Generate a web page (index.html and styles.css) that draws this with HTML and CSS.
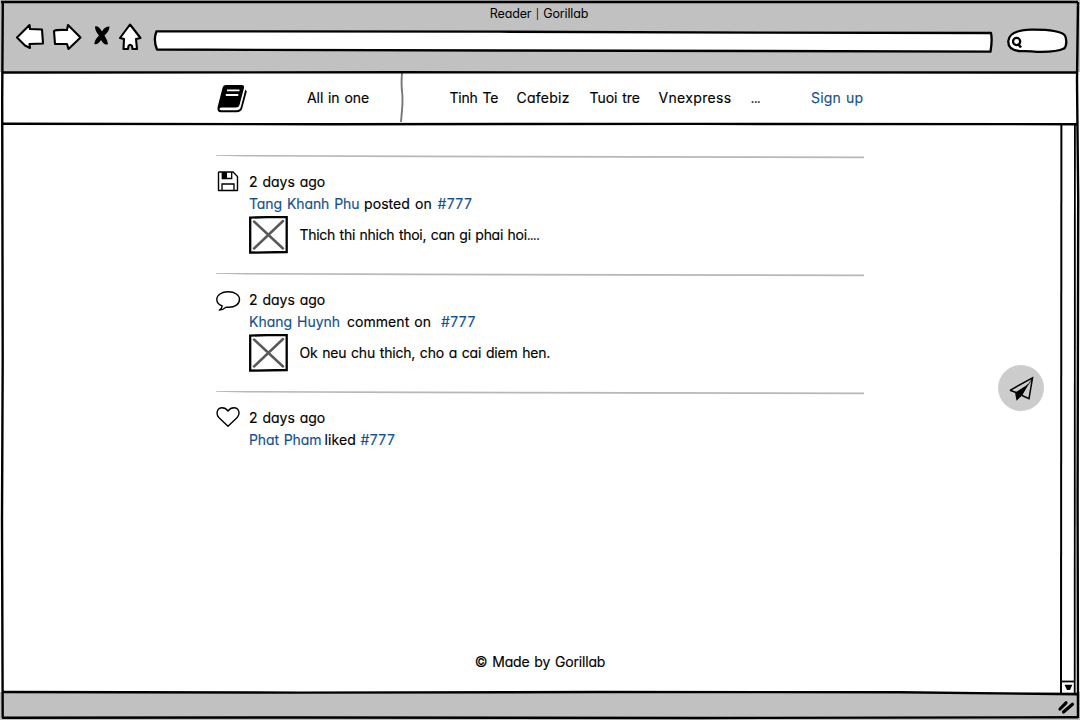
FILE: index.html
```
<!DOCTYPE html>
<html lang="vi">
<head>
<meta charset="utf-8">
<title>Reader | Gorillab</title>
<link rel="stylesheet" href="styles.css">
</head>
<body>
<div class="window">
  <div class="chrome">
    <div class="window-title">Reader <span class="pipe">|</span> Gorillab</div>
    <div class="toolbar">
      <svg class="nav-icons" width="140" height="44" viewBox="10 16 140 44">
        <g fill="#fff" stroke="#000" stroke-width="2.1" stroke-linejoin="round">
          <path d="M17 37.5 L29.500 25 L30 29 L42 29.500 L43 43.500 L29.500 44 L30 48 L25 45.500 Z"/>
          <path d="M54 31 Q56 29.500 67 30 L68 25 L80.500 37.500 L68.500 49 L67 44 L55 44 Z"/>
          <path d="M120 38 L130 24.500 L140.500 38 L136 39 L137 49 L132.500 49 L132 46 Q130 43.500 128.500 46 L128 49 L123.500 49 L124 39 Z"/>
        </g>
        <path d="M95 26.500 Q98.500 25.500 102 31.500 Q104.500 26.500 109.500 26.500 Q109.500 31 104.500 35.500 Q107.500 40 108 44 Q104.500 46 101 40 Q98 45 94.300 44 Q94.500 40 99 35.500 Q95 31 95 26.500Z" fill="#000"/>
      </svg>
      <svg class="address" width="842" height="26" viewBox="152 28 842 26">
        <path d="M156.500 31.300 L500 31.700 L760 32.700 L991 33 Q992.500 40 990.500 51.700 L760 51 L500 50.500 L157 49.500 Q153 40 156.500 31.300Z" fill="#fff" stroke="#000" stroke-width="2.300" stroke-linejoin="round"/>
      </svg>
      <svg class="search" width="64" height="30" viewBox="1005 26 64 30">
        <path d="M1008.300 41 C1009 33 1019 30 1031 29.700 C1045 29.500 1060 31 1064.500 35 C1067 38 1067 46 1064 48.500 C1058 51.500 1046 52 1037 51.800 C1029 51 1024 51.300 1019 51 C1011 50 1008 46 1008.300 41Z" fill="#fff" stroke="#000" stroke-width="2.300"/>
        <circle cx="1016.600" cy="41.500" r="3.600" fill="none" stroke="#000" stroke-width="2.300"/>
        <path d="M1018.500 44.500 L1021 47.500" stroke="#000" stroke-width="2.600"/>
      </svg>
    </div>
  </div>

  <header class="site-header">
    <svg class="logo" width="32" height="30" viewBox="216 83 32 30">
      <path d="M226 85 H241.500 Q244.800 85 244 88 L239.500 105 Q238.800 107.500 236 107.500 H222.500 Q219.500 107.500 219.500 108.800 Q219.500 110.300 222.500 110.300 H236.500 Q239.800 110.300 240.800 107 L245.300 89.500 L246.800 91.500 L242.200 108.500 Q240.800 112.300 236.800 112.300 H221 Q216.700 112.300 217.600 107 L222.500 88 Q223.200 85 226 85Z" fill="#000"/>
      <path d="M227 90.400 H239.500 M225.800 95 H238.300" stroke="#fff" stroke-width="1.900"/>
    </svg>
    <span class="all">All in one</span>
    <svg class="divider" width="6" height="50" viewBox="399 73 6 50"><path d="M402 73 Q401 85 402.300 94 Q402.800 102 402 110 L401 122" fill="none" stroke="#777" stroke-width="1.900"/></svg>
    <nav class="sources">
      <span class="tinh">Tinh Te</span><span class="cafe">Cafebiz</span><span class="tuoi">Tuoi tre</span><span class="vn">Vnexpress</span><span class="more">...</span>
    </nav>
    <a class="signup">Sign up</a>
  </header>

  <div class="viewport">
    <main class="feed">
      <article class="item">
        <svg class="rule" width="648" height="4" viewBox="0 0 648 4"><path d="M0 0 L30 0 L648 1.500 L648 3.200 L400 2.800 L200 2.200 L30 1.400 L0 .800Z"/></svg>
        <svg class="icon" width="26" height="26" viewBox="216 169 26 26">
          <path d="M219 172 H233 L237.500 176.500 V190 Q237.500 190.500 237 190.500 H219 Q218.500 190.500 218.500 190 V172.500Z" fill="#fff" stroke="#000" stroke-width="1.400"/>
          <path d="M222.300 172 V178.500 H231.700 V172 M222 190 V184 H234 V190" fill="none" stroke="#000" stroke-width="1.300"/>
          <path d="M222 172 H227 V179 H222Z"/>
        </svg>
        <div class="body">
          <div class="line time">2 days ago</div>
          <div class="line"><a class="tang">Tang Khanh Phu</a><span class="posted">posted on</span><a class="tag">#777</a></div>
          <div class="quote">
            <svg class="thumb" width="39" height="38" viewBox="0 0 39 38"><path d="M1.200 1.600 L18 1.200 H37.700 V36 L1.200 36.600Z" fill="#fff" stroke="#000" stroke-width="2.300"/><path d="M5 5.500 L34 32.500 M34 5 L5 32.500" stroke="#58595b" stroke-width="2.500" stroke-linecap="round"/></svg>
            <span class="thich">Thich thi nhich thoi, can gi phai hoi<span class="dots">....</span></span>
          </div>
        </div>
      </article>
      <article class="item">
        <svg class="rule" width="648" height="4" viewBox="0 0 648 4"><path d="M0 0 L30 0 L648 1.500 L648 3.200 L400 2.800 L200 2.200 L30 1.400 L0 .800Z"/></svg>
        <svg class="icon" width="26" height="26" viewBox="216 287 26 26">
          <path d="M219.300 310 Q222 308.500 222.200 306 C218.500 304.500 216.800 302 216.800 299.500 C216.800 295 221.500 291.800 228.200 291.800 C235 291.800 239.500 295 239.500 299.500 C239.500 304 235 307.500 228.500 307.300 L226 307.200 Q223 309.800 219.300 310Z" fill="#fff" stroke="#000" stroke-width="1.400" stroke-linejoin="round"/>
        </svg>
        <div class="body">
          <div class="line time">2 days ago</div>
          <div class="line"><a class="khang">Khang Huynh</a><span class="comment">comment on</span><a class="tag">#777</a></div>
          <div class="quote">
            <svg class="thumb" width="39" height="38" viewBox="0 0 39 38"><path d="M1.200 1.600 L18 1.200 H37.700 V36 L1.200 36.600Z" fill="#fff" stroke="#000" stroke-width="2.300"/><path d="M5 5.500 L34 32.500 M34 5 L5 32.500" stroke="#58595b" stroke-width="2.500" stroke-linecap="round"/></svg>
            <span class="ok">Ok neu chu thich, cho a cai diem hen.</span>
          </div>
        </div>
      </article>
      <article class="item">
        <svg class="rule" width="648" height="4" viewBox="0 0 648 4"><path d="M0 0 L30 0 L648 1.500 L648 3.200 L400 2.800 L200 2.200 L30 1.400 L0 .800Z"/></svg>
        <svg class="icon" width="26" height="26" viewBox="216 405 26 26">
          <path d="M228 426.300 L218.800 417.500 C215.500 413.500 217.300 407.800 222 407.800 C225 407.800 226.500 409 228 411 C229.500 409 231.200 407.800 234 407.800 C238.900 407.800 240.600 413.500 237.200 417.500Z" fill="#fff" stroke="#000" stroke-width="1.400" stroke-linejoin="round"/>
        </svg>
        <div class="body">
          <div class="line time">2 days ago</div>
          <div class="line"><a class="phat">Phat Pham</a><span class="liked">liked</span><a class="tag">#777</a></div>
        </div>
      </article>
    </main>
    <footer class="credit">© Made by Gorillab</footer>
  </div>

  <div class="statusbar"></div>

  <button class="send" aria-label="Send">
    <svg width="46" height="46" viewBox="998 365 46 46">
      <path d="M1010 390.300 L1032.500 377.800 L1029 398.700 L1022 395.500 M1010 390.300 L1016 392.500" fill="none" stroke="#000" stroke-width="1.500" stroke-linejoin="miter"/>
      <path d="M1015 392.500 L1025.500 386 L1028.500 383.500 L1022.500 395 L1016.500 400.800Z" fill="#000"/>
      <path d="M1021 395.500 L1032 379" stroke="#000" stroke-width=".8"/>
    </svg>
  </button>

  <svg class="frame" width="1080" height="720" viewBox="0 0 1080 720">
    <g fill="none" stroke="#000" stroke-width="2.400">
      <path d="M1 2 L540 2 L1078 2"/>
      <path d="M2.800 2 L2.200 100 L2.700 360 L2 520 L2.700 718"/>
      <path d="M1078 2 L1077 80 L1078.200 200 L1077.600 500 L1078 718"/>
      <path d="M2 72.500 L400 72.300 L1077 72.500"/>
      <path d="M2 123.700 L330 124.200 L700 123.900 L1078 124.200"/>
      <path d="M2 692 L300 692.600 L600 692 L900 692.300 L1078 694.300"/>
      <path d="M2 717.800 L300 717.500 L700 718 L1078 717.300"/>
      <path d="M1061.400 125 L1061 693" stroke-width="2"/>
      <path d="M1074.900 125 L1074.700 693" stroke-width="1.800"/>
      <path d="M1061 681.500 H1075" stroke-width="1.800"/>
      <path d="M1060 709 L1066 702.800 M1063.500 712 L1072.500 704.200" stroke-width="3.200" stroke-linecap="round"/>
    </g>
    <path d="M1064.500 684.800 H1072.300 L1070 690 H1067Z"/>
  </svg>
</div>
</body>
</html>
```
FILE: styles.css
```
body { margin: 0; background: #fff; }
.window {
  position: relative;
  width: 1080px;
  height: 720px;
  display: flex;
  flex-direction: column;
  overflow: hidden;
  font: 14px/22px Inter, "Noto Sans", sans-serif;
  font-feature-settings: "cv11";
  -webkit-text-stroke: .15px currentColor;
  word-spacing: 1px;
  color: #000;
  white-space: nowrap;
}
svg { display: block; flex: none; }
a { color: #13508f; }

.chrome { height: 72px; background: #c1c1c1; }
.window-title {
  height: 16px;
  padding: 3px 2px 0 0;
  text-align: center;
  font-size: 12.5px;
  letter-spacing: -.15px;
  line-height: 21px;
  -webkit-text-stroke: 0;
}
.pipe { font-size: 10px; vertical-align: .5px; line-height: 1; }
.toolbar { display: flex; align-items: flex-start; padding-left: 10px; }
.nav-icons { margin-top: -3px; }
.address { margin: 9px 0 0 2px; }
.search { margin: 7px 0 0 11px; }

.site-header { height: 52px; display: flex; align-items: center; padding-left: 216px; }
.logo { margin-right: 59px; }
.all { width: 92px; letter-spacing: -.08px; }
.divider { margin-right: 44.500px; }
.sources { display: flex; width: 361.500px; }
.tinh { width: 67px; letter-spacing: -.2px; }
.cafe { width: 73px; letter-spacing: .25px; }
.tuoi { width: 69px; letter-spacing: -.05px; }
.vn { width: 92px; letter-spacing: .33px; }
.more { letter-spacing: -.9px; -webkit-text-stroke: 0; }
.signup { letter-spacing: .18px; }

.viewport { flex: 1; display: flex; flex-direction: column; align-items: center; padding-top: 31px; }
.feed { width: 648px; }
.item { height: 118px; display: grid; grid-template: 14px 1fr / 33px 1fr; }
.rule { grid-column: 1 / 3; fill: #b8b8b8; }
.line { display: flex; height: 22px; }
.body { padding-top: 2px; }
.time { letter-spacing: -.02px; }
.tag { letter-spacing: .4px; }
.tang { width: 115px; letter-spacing: -.08px; }
.posted { width: 73.500px; letter-spacing: .08px; }
.khang { width: 98px; letter-spacing: 0; }
.comment { width: 94px; letter-spacing: .05px; }
.phat { width: 75.500px; letter-spacing: -.12px; }
.liked { width: 36px; letter-spacing: .1px; }
.quote { display: flex; align-items: center; gap: 11.500px; padding-top: 1px; }
.thich { letter-spacing: -.3px; }
.dots { letter-spacing: -1px; -webkit-text-stroke: 0; }
.ok { letter-spacing: -.2px; }
.credit { margin: auto 0 19px; letter-spacing: -.16px; }

.statusbar { height: 28px; background: #c1c1c1; }
.send {
  position: absolute;
  left: 998px;
  top: 365px;
  width: 46px;
  height: 46px;
  padding: 0;
  border: 0;
  border-radius: 50%;
  background: #ccc;
}
.frame { position: absolute; inset: 0; pointer-events: none; }
```
